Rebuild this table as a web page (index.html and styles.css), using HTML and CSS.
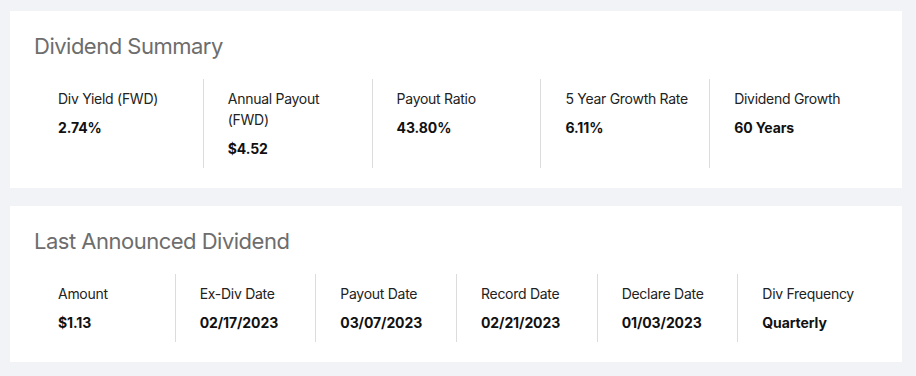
FILE: index.html
```html
<!DOCTYPE html>
<html lang="en">
<head>
<meta charset="utf-8">
<title>Dividend Summary</title>
<link rel="stylesheet" href="styles.css">
</head>
<body>
<main class="page">
  <section class="card">
    <h2 class="card-title">Dividend Summary</h2>
    <div class="stats stats-5">
      <div class="stat"><div class="label">Div Yield (FWD)</div><div class="value">2.74%</div></div>
      <div class="stat"><div class="label">Annual Payout (FWD)</div><div class="value">$4.52</div></div>
      <div class="stat"><div class="label">Payout Ratio</div><div class="value">43.80%</div></div>
      <div class="stat"><div class="label">5 Year Growth Rate</div><div class="value">6.11%</div></div>
      <div class="stat"><div class="label">Dividend Growth</div><div class="value">60 Years</div></div>
    </div>
  </section>
  <section class="card">
    <h2 class="card-title">Last Announced Dividend</h2>
    <div class="stats stats-6">
      <div class="stat"><div class="label">Amount</div><div class="value">$1.13</div></div>
      <div class="stat"><div class="label">Ex-Div Date</div><div class="value">02/17/2023</div></div>
      <div class="stat"><div class="label">Payout Date</div><div class="value">03/07/2023</div></div>
      <div class="stat"><div class="label">Record Date</div><div class="value">02/21/2023</div></div>
      <div class="stat"><div class="label">Declare Date</div><div class="value">01/03/2023</div></div>
      <div class="stat"><div class="label">Div Frequency</div><div class="value">Quarterly</div></div>
    </div>
  </section>
</main>
</body>
</html>
```

FILE: styles.css
```css
html, body {
  margin: 0;
  padding: 0;
  background: #f2f3f7;
  font-family: Inter, "Noto Sans", sans-serif;
  color: #1a1a1a;
}

.page {
  display: flex;
  flex-direction: column;
  gap: 18px;
  padding: 11px 14px 0 10px;
}

.card {
  background: #ffffff;
  padding: 21px 24px 20px 24px;
}

.card-title {
  margin: 0 0 19px 0;
  font-size: 22px;
  line-height: 28px;
  font-weight: 400;
  color: #6d6d6d;
  letter-spacing: -0.5px;
}

.stats {
  display: grid;
}

.stats-5 { grid-template-columns: repeat(5, 1fr); }
.stats-6 { grid-template-columns: repeat(6, 1fr); }

.stat {
  padding: 9px 12px 9px 24px;
  border-left: 1px solid #dcdcdc;
}

.stats-5 .stat {
  padding-right: 20px;
}

.stat:first-child {
  border-left: none;
}

.label {
  font-size: 14px;
  line-height: 21px;
  color: #222222;
  letter-spacing: -0.28px;
}

.value {
  margin-top: 8px;
  font-size: 14px;
  line-height: 21px;
  font-weight: 700;
  color: #111111;
  letter-spacing: -0.1px;
}
```
